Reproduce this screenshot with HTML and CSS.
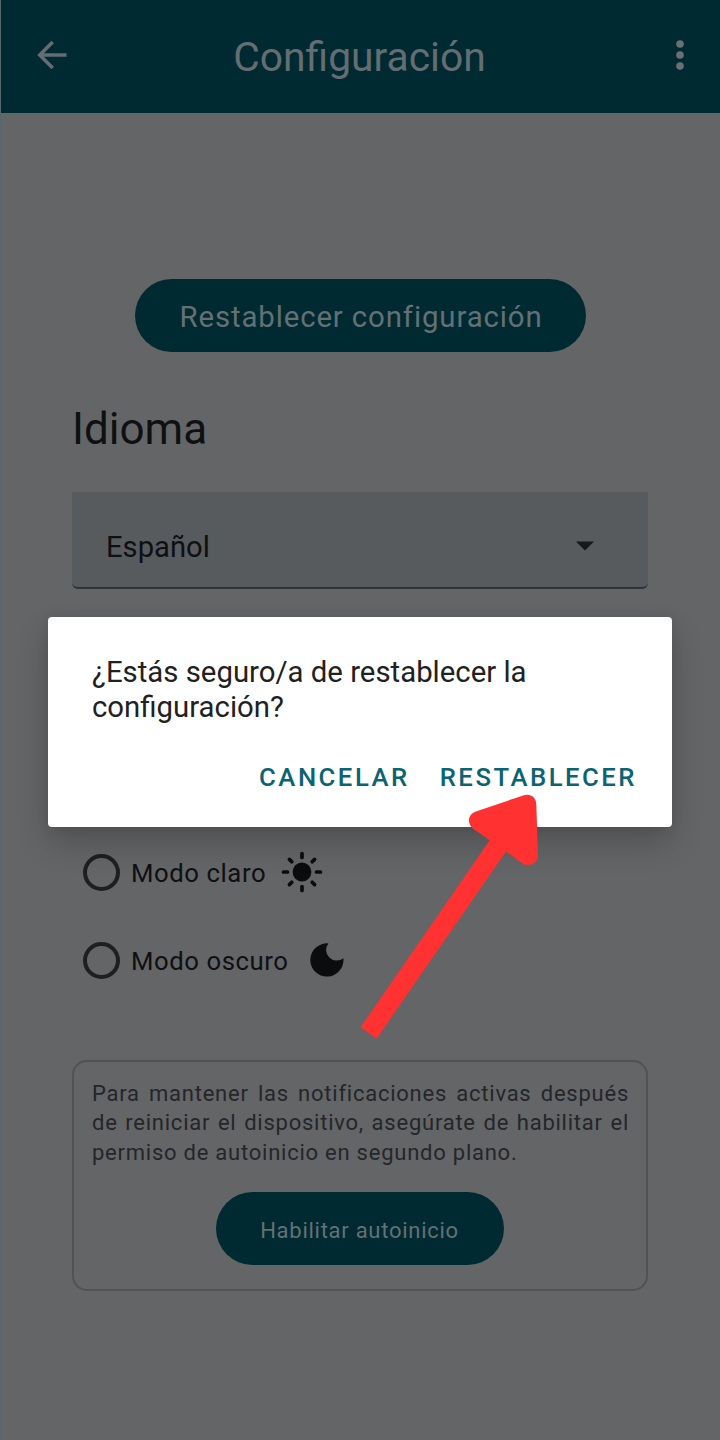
FILE: index.html
```html
<!DOCTYPE html>
<html lang="es">
<head>
<meta charset="utf-8">
<title>Configuración</title>
<link rel="stylesheet" href="styles.css">
</head>
<body>
<div class="screen">
  <header class="app-bar">
    <svg class="back" width="32" height="32" viewBox="0 0 32 32"><path d="M30.5 16H3.5M16.7 3 3.7 16 16.7 29" fill="none" stroke="#646d71" stroke-width="3.5"/></svg>
    <h1 class="title">Configuración</h1>
    <svg class="more" width="8" height="32" viewBox="0 0 8 32" fill="#6a7174"><circle cx="4" cy="5" r="3.8"/><circle cx="4" cy="16" r="3.8"/><circle cx="4" cy="27" r="3.8"/></svg>
  </header>
  <main class="content">
    <button class="pill pill-reset">Restablecer configuración</button>
    <h2 class="section">Idioma</h2>
    <div class="select">
      <span class="select-value">Español</span>
      <svg class="caret" width="18" height="10" viewBox="0 0 18 10"><path d="M0 .5h18L9 9.5z" fill="#16191c"/></svg>
    </div>
    <div class="modes">
      <label class="mode"><span class="radio"></span><span class="mode-name">Modo claro</span>
        <svg class="sun" width="42" height="42" viewBox="-21 -21 42 42"><circle r="9.4" fill="#0b0c0e"/><path d="M0-18.5v4M0 14.5v4M-18.5 0h4M14.5 0h4M-12.6-12.6l2.4 2.4M10.2 10.2l2.4 2.4M-12.6 12.6l2.4-2.4M10.2-10.2l2.4-2.4" stroke="#0b0c0e" stroke-width="3.7" stroke-linecap="round"/></svg>
      </label>
      <label class="mode"><span class="radio"></span><span class="mode-name">Modo oscuro</span>
        <svg class="moon" width="34" height="34" viewBox="0 0 34 34"><path d="M18.4.4A10.6 10.6 0 0 0 33.4 15.2 16.6 16.6 0 1 1 18.4.4z" fill="#0b0c0e"/></svg>
      </label>
    </div>
    <section class="card">
      <p class="note">Para mantener las notificaciones activas después de reiniciar el dispositivo, asegúrate de habilitar el permiso de autoinicio en segundo plano.</p>
      <button class="pill pill-auto">Habilitar autoinicio</button>
    </section>
  </main>
  <div class="dialog">
    <p class="dialog-text">¿Estás seguro/a de restablecer la configuración?</p>
    <div class="actions"><button class="action">CANCELAR</button><button class="action">RESTABLECER</button></div>
  </div>
  <svg class="pointer" width="190" height="260" viewBox="355 785 190 260"><path d="M360.5 1027.3 489.7 840.3 473.5 829C466.5 823.5 467.5 814 476.7 811.2L523.3 795.4C530 793 536.2 797 536.3 804L538 855.5C538.2 863 529 868 521.7 863L506 851.5 376.5 1038.7z" fill="#ff3131"/></svg>
</div>
</body>
</html>
```
FILE: styles.css
```css
* { box-sizing: border-box; }
body { margin: 0; background: #646567; font-family: Roboto, "Liberation Sans", sans-serif; }
h1, h2, p { margin: 0; font-weight: 400; }
button { border: 0; padding: 0; background: none; font: inherit; }
.screen { position: relative; width: 720px; height: 1440px; overflow: hidden; border-left: 1px solid #58676b; }
.app-bar { height: 113px; background: #002a32; display: flex; align-items: center; justify-content: space-between; padding: 0 36px 4px 35px; }
.title { font-size: 40.8px; line-height: 48px; color: #646d71; padding: 4px 25px 0 0; }
.content { display: flex; flex-direction: column; padding: 166px 72px 0 71px; }
.pill { align-self: center; height: 73px; border-radius: 37px; background: #002a32; color: #647074; }
.pill-reset { width: 451px; margin-left: 1px; font-size: 29.4px; letter-spacing: .87px; padding: 3px 0 0 1px; }
.section { font-size: 44px; line-height: 52px; margin-top: 51px; color: #0e1012; }
.select { height: 97px; margin-top: 37px; display: flex; align-items: center; justify-content: space-between; background: #575b5e; border-bottom: 2px solid #303336; border-radius: 1px 1px 6px 6px; padding: 14px 54px 0 34px; }
.select-value { font-size: 29.2px; color: #0e1012; }
.caret { margin-bottom: 1px; }
.modes { margin-top: 239px; padding-left: 11px; }
.mode { display: flex; align-items: center; height: 88px; }
.radio { width: 37px; height: 37px; border: 4px solid #1d1f22; border-radius: 50%; }
.mode-name { margin-left: 11px; font-size: 25.7px; letter-spacing: .58px; color: #0e1012; padding-top: 2px; }
.sun { margin-left: 15px; }
.moon { margin-left: 21px; }
.card { margin-top: 56px; height: 231px; border: 2px solid #515255; border-radius: 15px; display: flex; flex-direction: column; padding: 17px 17px 0 18px; }
.note { font-size: 22px; line-height: 29.4px; letter-spacing: .76px; text-align: justify; color: #242629; }
.pill-auto { width: 288px; margin-top: 25px; margin-right: 2px; font-size: 22px; letter-spacing: .73px; padding: 3px 0 0; }
.dialog { position: absolute; left: 47px; top: 617px; width: 624px; height: 210px; background: #fff; border-radius: 4px; box-shadow: 0 16px 32px rgba(0, 0, 0, .2), 0 0 12px rgba(0, 0, 0, .08); padding: 38px 35px 0 44px; }
.dialog-text { font-size: 29.35px; line-height: 35px; color: #212121; }
.actions { display: flex; justify-content: flex-end; gap: 30px; margin-top: 37px; }
.action { font-size: 25.7px; line-height: 30px; font-weight: 500; letter-spacing: 2.5px; color: #0b6373; }
.pointer { position: absolute; left: 354px; top: 785px; }
```
